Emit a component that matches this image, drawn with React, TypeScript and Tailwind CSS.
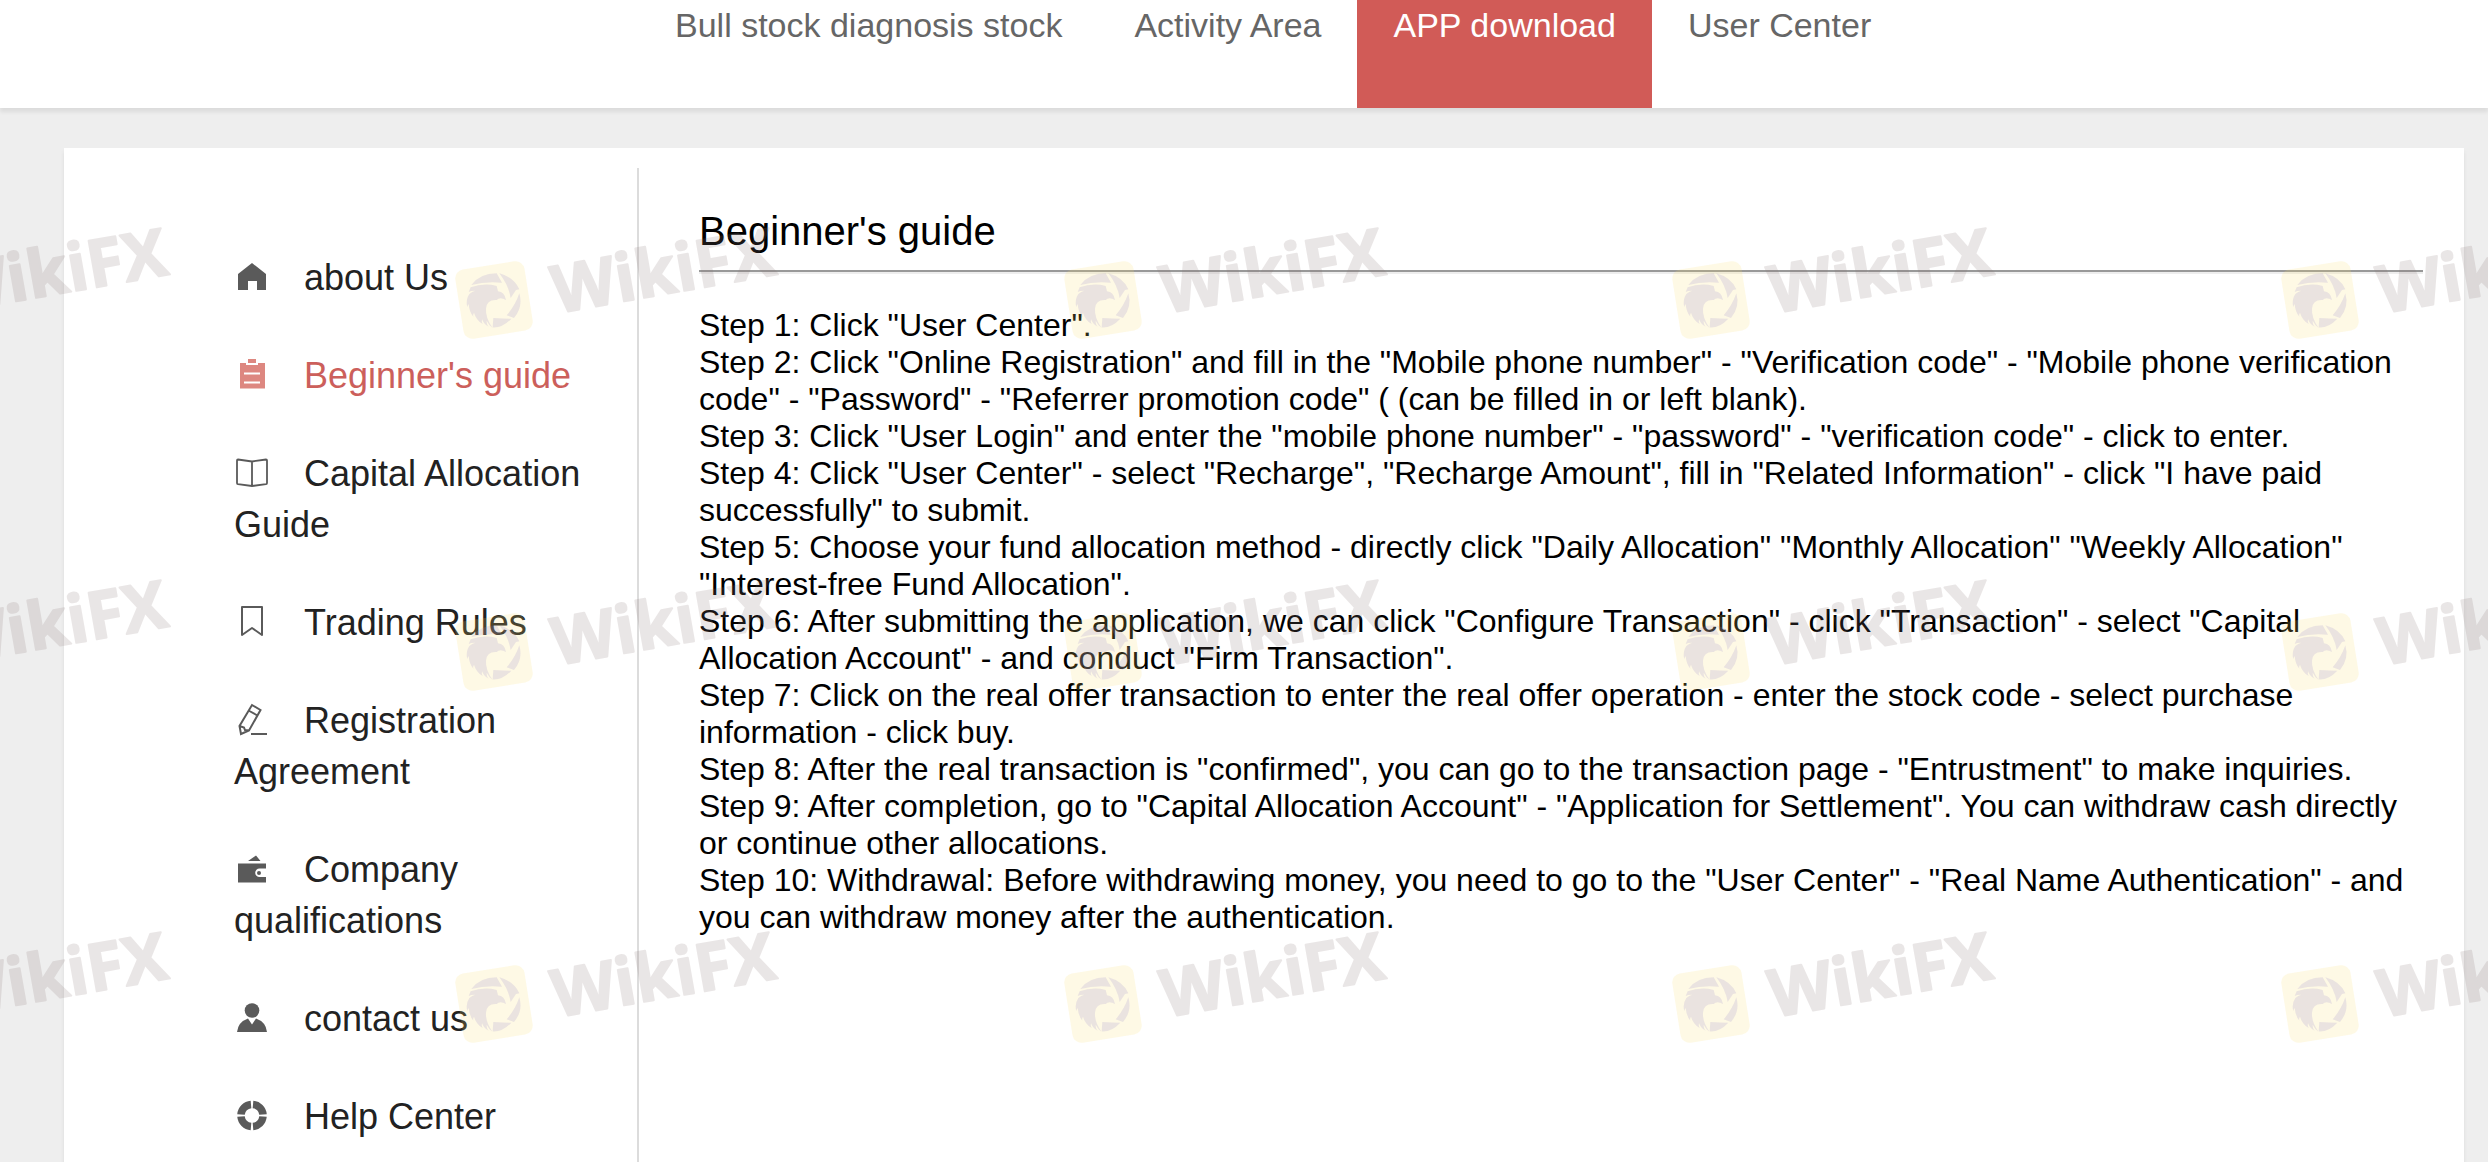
import type { ReactNode } from 'react'
import clsx from 'clsx'

type MenuItem = {
  label: string
  icon: ReactNode
  active?: boolean
}

const NAV = ['Bull stock diagnosis stock', 'Activity Area', 'APP download', 'User Center']

const MENU: MenuItem[] = [
  {
    label: 'about Us',
    icon: <path fill="currentColor" d="M4 16 18 5l14 11v16h-9v-9h-9v9H4z" />,
  },
  {
    label: "Beginner's guide",
    active: true,
    icon: (
      <path
        fill="currentColor"
        fillRule="evenodd"
        d="M14 3h8v4h-8zM6 7h6v2h12V7h7v25.500H6zM10 16.500v2h16v-2zM10 25.500v2h16v-2z"
      />
    ),
  },
  {
    label: 'Capital Allocation Guide',
    icon: (
      <path
        fill="none"
        stroke="currentColor"
        strokeWidth="1.8"
        strokeLinejoin="round"
        d="M18 7.500 4 5.500q-1 0-1 1V29q0 1 1 1.200L18 32l14-1.800q1-.2 1-1.200V6.500q0-1-1-1zM18 7.500V32"
      />
    ),
  },
  {
    label: 'Trading Rules',
    icon: <path fill="none" stroke="currentColor" strokeWidth="2" d="M8 4h20v28l-10-7-10 7z" strokeLinejoin="round" />,
  },
  {
    label: 'Registration Agreement',
    icon: (
      <path
        fill="none"
        stroke="currentColor"
        strokeWidth="2"
        d="M18 4 26.500 9 15 29.500 7 33 5.500 25zM14.500 9.500l9 5M5.500 25l4.500 1.500L11 29l4 .5M17 33h16"
      />
    ),
  },
  {
    label: 'Company qualifications',
    icon: (
      <>
        <path fill="currentColor" d="M14 11l8-5.500 4.500 5.500zM4 13.500h28v5h-6.500a4.300 4.300 0 0 0 0 8.600H32v5.400H4z" />
        <circle cx="25" cy="23" r="2" fill="currentColor" />
      </>
    ),
  },
  {
    label: 'contact us',
    icon: (
      <>
        <circle cx="18" cy="11.500" r="7.300" fill="currentColor" />
        <path fill="currentColor" d="M3 33q1-10 11-13.500l4 6 4-6Q32 23 33 33z" />
      </>
    ),
  },
  {
    label: 'Help Center',
    icon: (
      <path
        fill="none"
        stroke="currentColor"
        strokeWidth="7.500"
        d="M19 7.500A11 11 0 0 1 29 17.500M29 19.500A11 11 0 0 1 19 29.500M17 29.500A11 11 0 0 1 7 19.500M7 17.500A11 11 0 0 1 17 7.500"
      />
    ),
  },
]

const STEPS = [
  'Step 1: Click "User Center".',
  'Step 2: Click "Online Registration" and fill in the "Mobile phone number" - "Verification code" - "Mobile phone verification code" - "Password" - "Referrer promotion code" ( (can be filled in or left blank).',
  'Step 3: Click "User Login" and enter the "mobile phone number" - "password" - "verification code" - click to enter.',
  'Step 4: Click "User Center" - select "Recharge", "Recharge Amount", fill in "Related Information" - click "I have paid successfully" to submit.',
  'Step 5: Choose your fund allocation method - directly click "Daily Allocation" "Monthly Allocation" "Weekly Allocation" "Interest-free Fund Allocation".',
  'Step 6: After submitting the application, we can click "Configure Transaction" - click "Transaction" - select "Capital Allocation Account" - and conduct "Firm Transaction".',
  'Step 7: Click on the real offer transaction to enter the real offer operation - enter the stock code - select purchase information - click buy.',
  'Step 8: After the real transaction is "confirmed", you can go to the transaction page - "Entrustment" to make inquiries.',
  'Step 9: After completion, go to "Capital Allocation Account" - "Application for Settlement". You can withdraw cash directly or continue other allocations.',
  'Step 10: Withdrawal: Before withdrawing money, you need to go to the "User Center" - "Real Name Authentication" - and you can withdraw money after the authentication.',
]

const MARK_COLS = [-114, 494, 1103, 1711, 2320]
const MARK_ROWS = [300, 652, 1004]

// One stamp, centred on its badge
function Stamp() {
  return (
    <>
      <g transform="rotate(-9)">
        <rect x="-35" y="-35" width="70" height="70" rx="9" fill="#fcdc6e" fillOpacity="0.18" />
      </g>
      {/* eagle head inside a shutter ring */}
      <g transform="scale(0.3333)" fill="#9484c8" fillOpacity="0.19">
        <path d="M-68-45Q-42-80 8-80L24-52Q-25-57-68-45z" />
        <path d="M16-80Q60-68 76-32L66-30 50-6Q44-44 16-80z" />
        <path d="M76-20Q88 20 60 54L38 46Q64 16 76-20z" />
        <path d="M-2 54Q30 56 52 56 26 84-4 82z" />
        <path d="M-70-38Q-30-52 8-42L12-26Q32-24 36 0 18-10 8 0-22-2-24 26-26 54-4 84-16 74-22 62-22 76-16 80-28 76-36 58-38 66-34 72-54 60-60 38-64 44-62 50-74 36-76 12-80 18-80 22-86 0-74-18-66-26-56-28-70-28-76-24z" />
      </g>
      <g transform="rotate(-10)">
        <text
          x="59"
          y="24"
          className="font-['Open_Sans',sans-serif] text-[66px] font-bold"
          fill="#8c7878"
          stroke="#8c7878"
          strokeWidth="2"
          strokeLinejoin="round"
          opacity="0.18"
        >
          WikiFX
        </text>
      </g>
    </>
  )
}

function Watermark() {
  return (
    <svg aria-hidden="true" className="pointer-events-none absolute inset-0 h-full w-full">
      {MARK_ROWS.map(y =>
        MARK_COLS.map(x => (
          <g key={`${x}-${y}`} transform={`translate(${x} ${y})`}>
            <Stamp />
          </g>
        ))
      )}
    </svg>
  )
}

export default function App() {
  return (
    <div className="relative flex min-h-screen flex-col overflow-hidden bg-[#eeeeee] font-['Liberation_Sans',Arial,sans-serif]">
      <header className="bg-white shadow-[0_4px_4px_rgba(0,0,0,0.08)]">
        <nav className="flex pl-[639px]">
          {NAV.map(label => (
            <a
              key={label}
              href="#"
              className={clsx(
                'px-9 pt-[5px] pb-[63px] text-[34px] leading-10 whitespace-nowrap',
                label === 'APP download' ? 'bg-[#d15b57] text-white' : 'text-[#666666]'
              )}
            >
              {label}
            </a>
          ))}
        </nav>
      </header>

      <div className="mt-10 mr-6 ml-16 flex flex-1 bg-white pt-5 shadow-[0_4px_4px_rgba(0,0,0,0.08)]">
        <aside className="w-[575px] shrink-0 border-r-2 border-[#dcdcdc] pt-[84px] pr-9 pb-4 pl-[170px]">
          <ul className="flex flex-col gap-[47px]">
            {MENU.map(item => (
              <li key={item.label} className="text-4xl leading-[51px]">
                <a href="#" className={item.active ? 'text-[#cc5f5b]' : 'text-[#222222]'}>
                  <svg
                    aria-hidden="true"
                    viewBox="0 0 36 32"
                    className={clsx(
                      'mr-[34px] inline-block h-8 w-9 overflow-visible align-baseline',
                      item.active ? 'text-[#dd8780]' : 'text-[#5a5a5a]'
                    )}
                  >
                    {item.icon}
                  </svg>
                  {item.label}
                </a>
              </li>
            ))}
          </ul>
        </aside>

        <main className="min-w-0 flex-1 pt-10 pr-[41px] pl-[60px] text-black">
          <h1 className="text-[40px] leading-[46px]">Beginner's guide</h1>
          <hr className="mt-4 mb-[33px] border-t-2 border-b-2 border-t-[#999999] border-b-[#eeeeee]" />
          {STEPS.map(step => (
            <p key={step} className="text-[32px] leading-[37px]">
              {step}
            </p>
          ))}
        </main>
      </div>

      <Watermark />
    </div>
  )
}
